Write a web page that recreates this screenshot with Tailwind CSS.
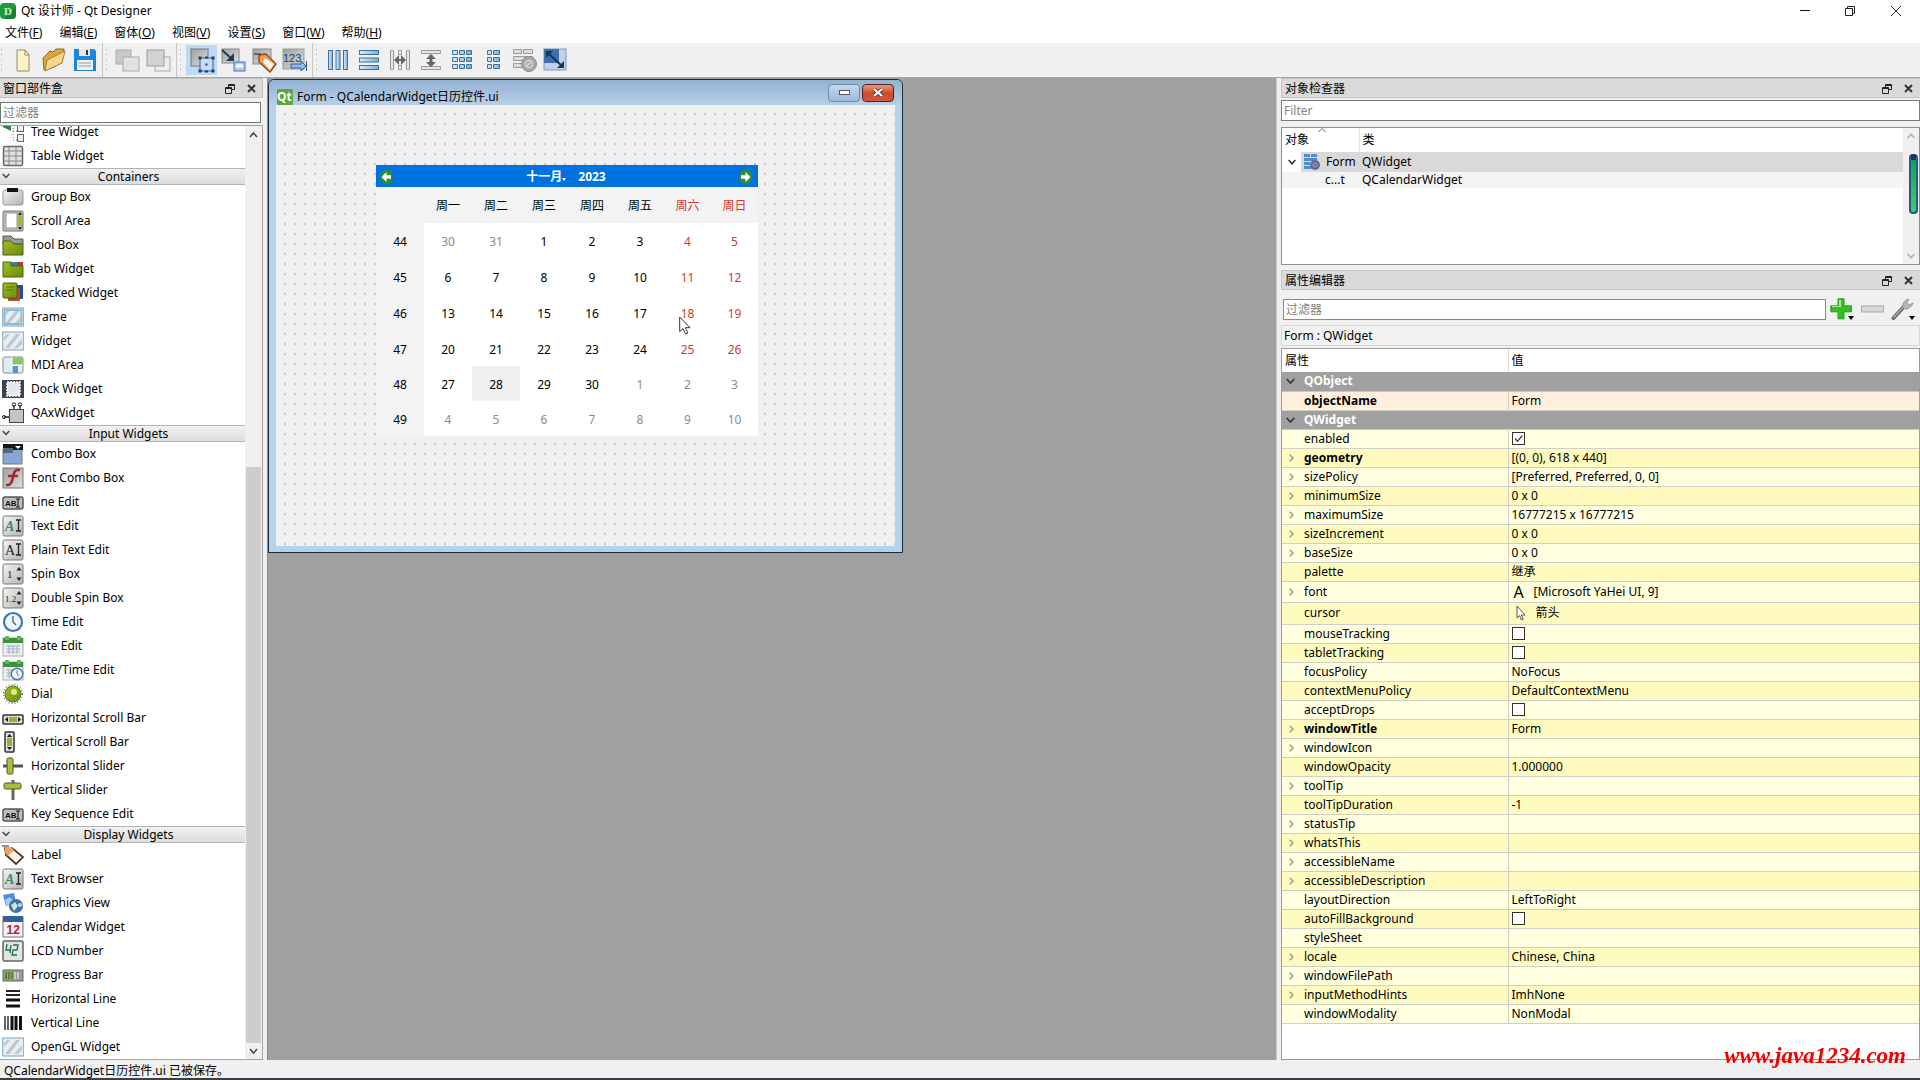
<!DOCTYPE html>
<html lang="zh-CN">
<head>
    <meta charset="UTF-8">
    <meta name="viewport" content="width=device-width, initial-scale=1.0">
    <title>Qt 设计师 - Qt Designer</title>
    <script src="https://cdn.jsdelivr.net/npm/@tailwindcss/browser@4"></script>
</head>
<body class="h-screen flex flex-col overflow-hidden bg-[#f0f0f0] text-black text-xs font-['Noto_Sans','Noto_Sans_CJK_SC',sans-serif]">

    <!-- gradients shared by the icons -->
    <svg class="absolute w-0 h-0" aria-hidden="true">
      <defs>
        <linearGradient id="grey" x1="0" y1="0" x2="1" y2="1"><stop offset="0" stop-color="#f4f4f4"/><stop offset="1" stop-color="#b4b4b4"/></linearGradient>
        <linearGradient id="blue" x1="0" y1="0" x2="1" y2="0"><stop offset="0" stop-color="#d6ebfa"/><stop offset="1" stop-color="#7db0d8"/></linearGradient>
        <linearGradient id="green" x1="0" y1="0" x2="1" y2="1"><stop offset="0" stop-color="#9fc024"/><stop offset="1" stop-color="#6a8a0c"/></linearGradient>
        <linearGradient id="steel" x1="0" y1="0" x2="1" y2="1"><stop offset="0" stop-color="#a0a0a0"/><stop offset="1" stop-color="#dedede"/></linearGradient>
      </defs>
    </svg>

    <!-- title bar -->
    <header class="bg-white">
      <div class="flex items-center h-[22px]">
        <svg class="w-4 h-4 rounded-sm" viewBox="0 0 16 16"><rect width="16" height="16" fill="#1f9a3d"/><path d="M16 3v13H4z" fill="#178033"/><text x="4" y="12" font-size="11" fill="#c9f2c4" font-family="Liberation Serif" font-weight="bold">D</text></svg>
        <h1 class="ml-[5px]">Qt 设计师 - Qt Designer</h1>
        <div class="ml-auto flex">
          <button class="w-[45px] h-[22px] flex items-center justify-center" aria-label="最小化"><svg class="w-3 h-3" viewBox="0 0 12 12"><path d="M1 5.500h10" stroke="#111"/></svg></button>
          <button class="w-[45px] h-[22px] flex items-center justify-center" aria-label="还原"><svg class="w-3 h-3" viewBox="0 0 12 12" fill="none" stroke="#222"><path d="M1.500 3.500h7v7h-7zM3.500 3.500v-2h7v7h-2"/></svg></button>
          <button class="w-[48px] h-[22px] flex items-center justify-center" aria-label="关闭"><svg class="w-3 h-3" viewBox="0 0 12 12"><path d="M1 1l10 10M11 1L1 11" stroke="#333"/></svg></button>
        </div>
      </div>
      <nav class="flex items-center h-[21px] gap-[17px] pl-[5px]">
        <button>文件(<u>F</u>)</button>
        <button>编辑(<u>E</u>)</button>
        <button>窗体(<u>O</u>)</button>
        <button>视图(<u>V</u>)</button>
        <button>设置(<u>S</u>)</button>
        <button>窗口(<u>W</u>)</button>
        <button>帮助(<u>H</u>)</button>
      </nav>
    </header>

    <!-- tool bars, filled by script -->
    <div id="toolbar" class="flex h-[35px] border-b border-[#a5a5a5]"></div>

    <main class="flex flex-1 min-h-0">

      <!-- widget box -->
      <aside class="w-[263px] shrink-0 flex flex-col">
        <div class="flex items-center h-5 pt-px pl-[3px] pr-[6px] bg-[#dadada] border border-l-0 border-[#c4c4c4]">
          <h2>窗口部件盒</h2>
          <button class="ml-auto" aria-label="浮动"><svg class="w-[10px] h-[10px]" viewBox="0 0 10 10" fill="none" stroke="#222"><path d="M3.500 3.500v-3h6v5h-3M.5 3.500h6v6h-6zM.5 4.500h6M3.500 1.500h6"/></svg></button>
          <button class="ml-3" aria-label="关闭"><svg class="w-[9px] h-[9px]" viewBox="0 0 9 9"><path d="M1 1l7 7M8 1L1 8" stroke="#333" stroke-width="2"/></svg></button>
        </div>
        <input type="text" aria-label="过滤器" placeholder="过滤器" class="mt-1 h-[21px] w-[261px] px-[2px] bg-white border border-[#6c7a74] placeholder:text-[#828282] outline-none">
        <div class="mt-[2px] flex flex-1 min-h-0 bg-white border border-[#a0a4a8] border-l-0">
          <div id="widgets" class="flex-1 min-w-0 overflow-hidden"></div>
          <div class="w-[17px] pr-px flex flex-col items-center bg-[#f0f0f0]">
            <svg class="w-[9px] h-4 shrink-0" viewBox="0 0 9 16"><path d="M1 11l3.500-4L8 11" fill="none" stroke="#444" stroke-width="1.500"/></svg>
            <div class="mt-[325px] flex-1 w-[15px] bg-[#cdcdcd]"></div>
            <svg class="w-[9px] h-4 shrink-0" viewBox="0 0 9 16"><path d="M1 6l3.500 4L8 6" fill="none" stroke="#444" stroke-width="1.500"/></svg>
          </div>
        </div>
      </aside>

      <!-- MDI area -->
      <section class="relative flex-1 ml-1 bg-[#a0a0a0] border-l border-[#8a8a8a]">
        <article class="absolute left-0 top-px w-[635px] h-[474px] flex flex-col rounded-t-md border border-[#1c2b36] bg-[#b5d2ec] pb-[6px]">
          <div class="flex items-center h-[25px] shrink-0 px-2 rounded-t-md bg-linear-to-b from-[#93b1d1] to-[#b7cfe9]">
            <svg class="w-4 h-4 mt-2" viewBox="0 0 16 16"><rect width="16" height="16" rx="1" fill="#5aa83a"/><text x="0" y="12" font-size="12" fill="#fff" font-family="Noto Sans" font-weight="bold">Qt</text></svg>
            <h2 class="ml-1 mt-2">Form - QCalendarWidget日历控件.ui</h2>
            <button aria-label="最小化" class="ml-auto w-8 h-[18px] flex items-center justify-center rounded-sm border border-[#6f8aa8] bg-linear-to-b from-[#c3d8ee] to-[#9dbbdc]"><svg class="w-[11px] h-[5px]" viewBox="0 0 11 5"><rect x=".5" y=".5" width="10" height="4" fill="#fff" stroke="#556"/></svg></button>
            <button aria-label="关闭" class="ml-[2px] w-8 h-[18px] flex items-center justify-center rounded-sm border border-[#5c1f18] bg-linear-to-b from-[#e59a84] via-[#cf4a2a] to-[#d0583a]"><svg class="w-[10px] h-[9px]" viewBox="0 0 10 9"><path d="M1 1l8 7M9 1L1 8" stroke="#433" stroke-width="3.500"/><path d="M1 1l8 7M9 1L1 8" stroke="#fff" stroke-width="2.200"/></svg></button>
          </div>
          <div class="relative flex-1 mx-[7px] bg-[#f0f0f0] bg-[radial-gradient(circle_at_9px_9px,#c8c8c8_1px,transparent_1px)] bg-[length:10px_10px]">
            <div class="absolute left-[100px] top-[60px] w-[382px]">
              <div class="flex items-center h-[22px] pl-1 pr-[6px] pt-px bg-[#0072df] text-white font-bold">
                <button aria-label="上个月"><svg class="w-[13px] h-4" viewBox="0 0 13 16"><ellipse cx="6.500" cy="8" rx="6.400" ry="7.500" fill="#2f8b3a"/><path d="M1.500 8L6.500 3v3.300H11v3.400H6.500V13z" fill="#fff"/></svg></button>
                <button class="ml-auto flex items-end">十一月<svg class="w-1 h-1 mb-1" viewBox="0 0 4 4"><path d="M0 1h4L2 4z" fill="#fff"/></svg></button>
                <button class="ml-3 mr-auto">2023</button>
                <button aria-label="下个月"><svg class="w-[13px] h-4" viewBox="0 0 13 16"><ellipse cx="6.500" cy="8" rx="6.400" ry="7.500" fill="#2f8b3a"/><path d="M11.500 8L6.500 3v3.300H2v3.400h4.500V13z" fill="#fff"/></svg></button>
              </div>
              <table id="calendar" class="w-full table-fixed text-center bg-white"></table>
            </div>
            <svg class="absolute left-[403px] top-[211px] w-3 h-[19px]" viewBox="0 0 12 19"><path d="M.7 1v14.500l3.300-3 2.500 5.500 2.300-1-2.400-5.300h4.600z" fill="#fff" stroke="#333"/></svg>
          </div>
        </article>
      </section>

      <!-- object inspector and property editor -->
      <aside class="w-[644px] shrink-0 pl-1 flex flex-col border-l border-[#c8c8c8]">
        <div class="flex items-center h-5 pt-px pl-[3px] pr-1 bg-[#dadada] border border-r-0 border-[#c4c4c4]">
          <h2>对象检查器</h2>
          <button class="ml-auto" aria-label="浮动"><svg class="w-[10px] h-[10px]" viewBox="0 0 10 10" fill="none" stroke="#222"><path d="M3.500 3.500v-3h6v5h-3M.5 3.500h6v6h-6zM.5 4.500h6M3.500 1.500h6"/></svg></button>
          <button class="ml-3 mr-[3px]" aria-label="关闭"><svg class="w-[9px] h-[9px]" viewBox="0 0 9 9"><path d="M1 1l7 7M8 1L1 8" stroke="#333" stroke-width="2"/></svg></button>
        </div>
        <input type="text" aria-label="Filter" placeholder="Filter" class="mt-[2px] h-[21px] px-[2px] bg-white border border-[#7a7a7a] placeholder:text-[#828282] outline-none">
        <div class="relative mt-[6px] h-[138px] flex bg-white border border-[#8f8f8f]">
          <div class="flex-1">
            <table class="w-full table-fixed text-left">
              <thead>
                <tr class="h-6">
                  <th class="relative w-[77px] pl-[3px] font-normal border-r border-[#e5e5e5]">对象<svg class="absolute left-9 top-0 w-2 h-1" viewBox="0 0 8 4"><path d="M.5 4L4 .5 7.500 4" fill="none" stroke="#666"/></svg></th>
                  <th class="pl-[3px] font-normal">类</th>
                </tr>
              </thead>
              <tbody>
                <tr class="h-5">
                  <td class="p-0">
                    <div class="flex items-center">
                      <button class="w-[19px] flex justify-center" aria-label="折叠"><svg class="w-2 h-[6px]" viewBox="0 0 8 6"><path d="M.7 1L4 4.800 7.300 1" fill="none" stroke="#333" stroke-width="1.600"/></svg></button>
                      <div class="flex-1 flex items-center h-5 pl-[3px] gap-[6px] bg-[#d9d9d9]">
                        <svg class="w-4 h-4" viewBox="0 0 16 16"><path d="M0 0h6v3H0zM7 0h6v3H7zM0 4h13v3H0zM0 8h6v3H0zM7 8h6v3H7zM0 12h7v3H0z" fill="#4d8fc9"/><circle cx="11" cy="11" r="5" fill="#646a94"/><circle cx="11" cy="11" r="2" fill="none" stroke="#a59cc0"/></svg>
                        Form
                      </div>
                    </div>
                  </td>
                  <td class="pl-[3px] bg-[#d9d9d9]">QWidget</td>
                </tr>
                <tr class="h-4 leading-4 bg-[#f4f4f4]">
                  <td class="pl-[43px]">c...t</td>
                  <td class="pl-[3px]">QCalendarWidget</td>
                </tr>
              </tbody>
            </table>
          </div>
          <div class="w-4 py-[5px] flex flex-col justify-between items-center bg-[#f0f0f0]">
            <svg class="w-2 h-[6px]" viewBox="0 0 8 6"><path d="M.7 5L4 1.200 7.300 5" fill="none" stroke="#b0b0b0" stroke-width="1.500"/></svg>
            <svg class="w-2 h-[6px]" viewBox="0 0 8 6"><path d="M.7 1L4 4.800 7.300 1" fill="none" stroke="#b0b0b0" stroke-width="1.500"/></svg>
          </div>
          <!-- level meter floating over the scroll bar -->
          <div class="absolute right-px top-[26px] w-[9px] h-[60px] rounded-sm border-2 border-[#235a86] border-t-[6px] border-t-[#173a5c] bg-linear-to-b from-[#12a05a] to-[#3fd06c]"></div>
        </div>

        <div class="mt-[5px] flex items-center h-5 pt-px pl-[3px] pr-1 bg-[#dadada] border border-r-0 border-[#c4c4c4]">
          <h2>属性编辑器</h2>
          <button class="ml-auto" aria-label="浮动"><svg class="w-[10px] h-[10px]" viewBox="0 0 10 10" fill="none" stroke="#222"><path d="M3.500 3.500v-3h6v5h-3M.5 3.500h6v6h-6zM.5 4.500h6M3.500 1.500h6"/></svg></button>
          <button class="ml-3 mr-[3px]" aria-label="关闭"><svg class="w-[9px] h-[9px]" viewBox="0 0 9 9"><path d="M1 1l7 7M8 1L1 8" stroke="#333" stroke-width="2"/></svg></button>
        </div>
        <div class="mt-2 flex items-center pl-[2px]">
          <input type="text" aria-label="过滤器" placeholder="过滤器" class="flex-1 h-[21px] px-[2px] bg-white border border-[#8a8a8a] placeholder:text-[#828282] outline-none">
          <button class="ml-1" aria-label="添加"><svg class="w-6 h-[22px]" viewBox="0 0 24 22"><path d="M8 .8h6v7h7.500v6H14v7H8v-7H.8v-6H8z" fill="#32c11e" stroke="#2a9a1c"/><path d="M9 2h2v7H2v-1h7z" fill="#a8ee90"/><path d="M18 18h6l-3 4z" fill="#000"/></svg></button>
          <button class="ml-[7px]" aria-label="删除"><svg class="w-6 h-[22px]" viewBox="0 0 24 22"><rect x=".5" y="8" width="22" height="6" fill="#d8d8d8" stroke="#a9a9a9"/></svg></button>
          <button class="ml-[6px] mr-[5px]" aria-label="设置"><svg class="w-6 h-[22px]" viewBox="0 0 24 22"><path d="M2.500 20L13 8.500" stroke="#666" stroke-width="4" stroke-linecap="round"/><path d="M2.500 19.500L13 8" stroke="#aaa" stroke-width="1.500"/><path d="M12 9.500c-1-5 2-8 6-8.500l-2 4 2 2 4-2c-1 4-5 6.500-8.500 6z" fill="#b5b5b5" stroke="#8a8a8a" stroke-width=".7"/><path d="M18 18h6l-3 4z" fill="#000"/></svg></button>
        </div>
        <div class="mt-[5px] h-[21px] leading-5 pl-[2px] bg-[#f2f2f2] border border-[#d5d5d5]">Form : QWidget</div>
        <div class="mt-[2px] flex-1 min-h-0 bg-white border border-[#9c9c9c]">
          <table id="properties" class="w-full table-fixed text-left border-collapse">
            <thead>
              <tr class="h-[23px]">
                <th class="w-[226px] p-0 pl-[3px] font-normal border-r border-[#dadada]">属性</th>
                <th class="p-0 pl-[3px] font-normal">值</th>
              </tr>
            </thead>
            <tbody></tbody>
          </table>
        </div>
      </aside>
    </main>

    <footer class="h-5 leading-[21px] shrink-0 pl-1 border-b-2 border-[#3d3d42]">QCalendarWidget日历控件.ui 已被保存。</footer>
    <a href="#" class="fixed right-[14px] bottom-[10px] text-[23px] leading-7 font-bold italic text-[#f00000] font-['Liberation_Serif',serif]">www.java1234.com</a>

<script>
  // every icon is drawn on a 22 x 22 grid
  const key = (s, x, size, font, fill) => `<rect x="1" y="1" width="20" height="20" rx="1.500" fill="url(#grey)" stroke="#777"/><text x="${x}" y="15" font-size="${size}" font-family="${font}" fill="${fill}">${s}</text>`
  const abi = '<rect x="1" y="6" width="20" height="12" rx="2" fill="#bdbdbd" stroke="#555" stroke-width="1.500"/><text x="3" y="15" font-size="8" font-weight="bold" font-family="Liberation Sans" fill="#111">AB</text><path d="M14 8h4M14 16h4M16 8v8" stroke="#111"/>'
  const ai = '<rect x="1" y="1" width="20" height="20" rx="1.500" fill="url(#grey)" stroke="#777"/><path d="M14 5h5M14 16h5M16.500 5v11" stroke="#222" stroke-width="1.300"/>'
  const glass = '<rect x=".7" y="2" width="21" height="18" fill="#e3eef5" stroke="#7ba3c0"/><path d="M3 18L14 4h4L7 18zM12 18l8-9v5l-4 4zM2 11l6-7H5L2 7z" fill="#c6c4c4"/>'
  const cal = '<rect x="1" y="3" width="20" height="18" fill="#eef0f0" stroke="#aaa"/><path d="M1 3h20v5H1z" fill="#3f9140"/><path d="M3 1h4v4H3zM15 1h4v4h-4z" fill="#63b35e"/><path d="M4 11h14M4 14h14M4 17h14M7 10v9M11 10v9M15 10v9" stroke="#9fb2c4"/>'
  const clock = '<circle cx="11" cy="11" r="9" fill="#eef5fc" stroke="#3f78b8" stroke-width="2.200"/><path d="M11 5v6l3 3" fill="none" stroke="#5b6b85" stroke-width="1.500"/>'
  const arrows = '<path d="M17 4l2.500 3.500h-5zM17 18l2.500-3.500h-5z" fill="#222"/>'
  const tag = '<path d="M3 4h7l11 9-7 7L4 11z" fill="#fdf3e4" stroke="#4a3420" stroke-width="1.700"/><path d="M3 3h6l3 3-6 6-3-3z" fill="#f2a25c"/><path d="M0 2h7" stroke="#222"/>'

  const icons = {
    tree: '<path d="M1 0l8 3v7L1 6z" fill="#2f7d3c"/><path d="M11 4v15M11 10h5M11 19h5" stroke="#666" stroke-dasharray="1 2"/><rect x="15.500" y="3.500" width="6" height="7" fill="#eee" stroke="#666"/><rect x="15.500" y="13.500" width="6" height="7" fill="#eee" stroke="#666"/>',
    table: '<rect x="1.500" y="1.500" width="19" height="19" rx="1.500" fill="#e0e0e0" stroke="#666" stroke-width="1.500"/><path d="M2 6h18M2 11h18M2 16h18M7 2v18M14 2v18" stroke="#888"/>',
    group: '<rect x="1" y="4" width="20" height="15" rx="2" fill="url(#grey)" stroke="#999"/><path d="M5 2h11v4H5z" fill="#111"/>',
    scroll: '<rect x="1" y="1" width="20" height="20" rx="1" fill="#bbb" stroke="#777"/><rect x="4" y="3" width="11" height="15" fill="#fff" stroke="#999"/><rect x="16" y="6" width="4" height="10" fill="#9cb83a"/><path d="M16 5h4l-2-3zM16 17h4l-2 3z" fill="#222"/>',
    tool: '<path d="M1 2h8l3 3h9v5H1z" fill="#999" stroke="#555"/><path d="M1 7h8l3 3h9v11H1z" fill="url(#green)" stroke="#4d5f12"/>',
    tab: '<path d="M1 4h20v5H1z" fill="#345"/><path d="M9 4h6v4H9z" fill="#3f78c0"/><path d="M15 4h6v4h-6z" fill="#a8442a"/><path d="M1 4h8v4h12v11H1z" fill="url(#green)" stroke="#4d5f12"/>',
    stacked: '<rect x="9" y="3" width="12" height="14" rx="1" fill="#274a9c"/><rect x="6" y="6" width="12" height="13" rx="1" fill="#b5482a"/><rect x="1" y="1" width="14" height="15" rx="1" fill="url(#green)" stroke="#4d5f12"/><path d="M4 5h8M4 8h8" stroke="#5d7410"/>',
    frame: glass + '<rect x="2.500" y="4" width="17" height="14" fill="none" stroke="#8dbbdc" stroke-width="2"/>',
    widget: glass,
    mdi: '<rect x="1" y="3" width="20" height="16" rx="1.500" fill="#e2ecf4" stroke="#8a8a8a"/><path d="M10 3h11v8H10z" fill="#8fc46a"/><path d="M10 12h6v7h-6z" fill="#5f94c4"/><path d="M10 3v16M10 11h11" stroke="#fff"/>',
    dock: '<rect x="0" y="2" width="22" height="18" fill="#3a4552"/><rect x="5" y="4" width="13" height="14" fill="#e4e8ec" stroke="#fff" stroke-width="1.500" stroke-dasharray="2 1"/>',
    ax: '<path d="M12 8V3M18 8V3M8 15H2" stroke="#222" stroke-width="1.300"/><circle cx="12" cy="2.500" r="1.700" fill="none" stroke="#222"/><circle cx="18" cy="2.500" r="1.700" fill="none" stroke="#222"/><circle cx="2" cy="15" r="1.500" fill="none" stroke="#222"/><rect x="7.500" y="7.500" width="14" height="13" fill="#c4c4c4" stroke="#444"/>',
    combo: '<path d="M1 6h19v15H1z" fill="#83a9d2" stroke="#777"/><path d="M1 1h20v6H1z" fill="#15181c"/><path d="M13 3h6l-3 3z" fill="#fff"/><path d="M1 5h10v5H1z" fill="#56677a"/>',
    font: '<rect x="1" y="1" width="20" height="20" fill="url(#steel)" stroke="#777"/><path d="M17 3c-4-1-5 2-6 7s-2 8-6 8M7 9h8" fill="none" stroke="#a8262a" stroke-width="2.600" stroke-linecap="round"/>',
    line: abi,
    text: ai + '<text x="3" y="16" font-size="14" font-style="italic" font-family="Liberation Serif" font-weight="bold" fill="#3f8a5a">A</text>',
    plain: ai + '<text x="3" y="16" font-size="14" font-family="Liberation Serif" fill="#222">A</text>',
    spin: key('1', 5, 11, 'Liberation Serif', '#222') + arrows,
    dspin: key('1.2', 3, 9, 'Liberation Serif', '#222') + arrows,
    time: clock,
    date: cal,
    datetime: cal + '<g transform="translate(8 8) scale(.64)">' + clock + '</g>',
    dial: '<circle cx="11" cy="11" r="9.300" fill="none" stroke="#777" stroke-width="1.500" stroke-dasharray="1 2"/><circle cx="11" cy="11" r="8" fill="url(#green)" stroke="#5d7a18"/><circle cx="12" cy="9" r="3" fill="#dcea8c"/>',
    hscroll: '<rect x="1" y="8" width="20" height="9" rx="1" fill="#ddd" stroke="#333" stroke-width="1.500"/><rect x="7" y="10" width="8" height="5" fill="#97b52c"/><path d="M6 10v5l-3-2.500zM16 10v5l3-2.500z" fill="#111"/>',
    vscroll: '<rect x="3" y="1" width="9" height="20" rx="1" fill="#ddd" stroke="#333" stroke-width="1.500"/><rect x="5" y="7" width="5" height="8" fill="#97b52c"/><path d="M5 6h5L7.500 3zM5 16h5l-2.500 3z" fill="#111"/>',
    hslider: '<path d="M1 11h20" stroke="#555" stroke-width="3"/><rect x="5" y="3" width="6" height="16" rx="1.500" fill="#a4bf45" stroke="#4d5f12"/>',
    vslider: '<path d="M11 1v20" stroke="#666" stroke-width="3"/><rect x="2" y="4" width="17" height="6" rx="1.500" fill="#a4bf45" stroke="#4d5f12"/>',
    keys: abi,
    label: tag,
    graphics: '<path d="M1 3l11-2 2 11-10 2z" fill="#4a8fd6"/><path d="M3 8l4-3 6 4-1 4-7 1z" fill="#9ed2ee"/><circle cx="14" cy="14" r="7" fill="#3b6fb6"/><path d="M9 13l4-3 3 4-4 5z" fill="#cfe6c0"/><circle cx="18" cy="13" r="2" fill="#b8d4f0"/>',
    calendar: '<rect x="1" y="1" width="20" height="20" fill="#f2f2f2" stroke="#777"/><path d="M1 0h20v6H1z" fill="#2f5f9e"/><text x="4.500" y="18" font-size="12" font-weight="bold" font-family="Liberation Sans" fill="#b3202a">12</text>',
    lcd: '<rect x="1" y="1" width="20" height="20" rx="1.500" fill="#dfe6e1" stroke="#666" stroke-width="1.500"/><path d="M5 4l-1 6h5M9 5l-1 8M11 5h5l-1 5h-4l-1 5h5" fill="none" stroke="#2d6a48" stroke-width="1.300"/>',
    progress: '<rect x="1" y="6" width="20" height="11" fill="#9a9a92" stroke="#666"/><path d="M4 8v7M7 8v7M10 8v7" stroke="#5d8a1c" stroke-width="2"/><path d="M13 8v7M16 8v7" stroke="#c8c8c8" stroke-width="2"/>',
    hline: '<path d="M4 3h14M4 7h14" stroke="#222" stroke-width="2"/><path d="M4 12h14M4 18h14" stroke="#111" stroke-width="3"/>',
    vline: '<path d="M3 4v14M6 4v14" stroke="#333" stroke-width="1.500"/><path d="M10 4v14M14 4v14M18.500 4v14" stroke="#111" stroke-width="3"/>',
    opengl: glass,

    // tool bar, 26 x 26 grid
    t_new: '<path d="M7 3h8l4 5v16H7z" fill="#fbf3c4" stroke="#8f8a6a"/><path d="M15 3v5h4z" fill="#fff" stroke="#8f8a6a"/>',
    t_open: '<path d="M2 11l7-7 3 1 3-3h8l-1 9-9 9-10 3z" fill="#d9a93c" stroke="#8a6a22"/><path d="M6 13L24 4l-3 12L4 24z" fill="#f3d78a" stroke="#a17d2c"/>',
    t_save: '<path d="M2 2h20l2 2v20H2z" fill="#1c86dc"/><path d="M7 2h11v7H7z" fill="#e8e8e8"/><path d="M14 3h2v5h-2z" fill="#333"/><path d="M5 13h16v10H5z" fill="#efefef"/><path d="M7 16h12M7 19h12" stroke="#999"/>',
    t_back: '<rect x="1" y="3" width="15" height="14" fill="#c9c9c9" stroke="#aaa"/><rect x="8" y="10" width="16" height="14" fill="#e2e2e2" stroke="#aaa"/>',
    t_front: '<rect x="9" y="10" width="15" height="14" fill="#eee" stroke="#aaa"/><rect x="1" y="3" width="17" height="16" fill="#d2d2d2" stroke="#999"/>',
    t_edit: '<rect x="2" y="2" width="17" height="17" fill="url(#steel)" stroke="#777"/><rect x="11" y="11" width="13" height="13" fill="#c4dcf6" stroke="#3a5f94"/><path d="M9.500 9.500h3v3h-3zM22.500 9.500h3v3h-3zM9.500 22.500h3v3h-3zM22.500 22.500h3v3h-3zM16 9.500h3v2h-3zM16 23.500h3v2h-3zM16.500 16.500h2v2h-2z" fill="#1f3c6a"/>',
    t_signal: '<rect x="2" y="2" width="17" height="14" fill="url(#steel)" stroke="#888"/><rect x="14" y="15" width="11" height="9" fill="#a9cdf2" stroke="#4a79b0"/><path d="M16 19h7" stroke="#fff" stroke-width="3"/><path d="M2 3l10 9" stroke="#223a55" stroke-width="2"/><path d="M14 14V6l-8 8z" fill="#223a55"/>',
    t_buddy: '<rect x="2" y="2" width="18" height="15" fill="url(#steel)" stroke="#888"/><path d="M8 8l7-1 10 10-6 8L8 15z" fill="#f29a55" stroke="#8a4a1c" stroke-width="1.400"/><path d="M14 11l9 6-4 6-7-8z" fill="#fff4e6"/><path d="M3 7h7" stroke="#222"/>',
    t_tab: '<rect x="1" y="2" width="21" height="20" fill="url(#steel)" stroke="#999"/><text x="1" y="15" font-size="11" font-family="Liberation Sans" fill="#153f80">123</text><path d="M9 17h10v-3l5 5-5 5v-3H9zM24.500 14v10" fill="#8fbce8" stroke="#2a5a9c"/>',
    t_h: '<g fill="url(#blue)" stroke="#3e709c"><rect x="3.500" y="3.500" width="4" height="19"/><rect x="11" y="3.500" width="4" height="19"/><rect x="18.500" y="3.500" width="4" height="19"/></g>',
    t_v: '<g fill="url(#blue)" stroke="#3e709c"><rect x="3.500" y="3.500" width="19" height="4"/><rect x="3.500" y="11" width="19" height="4"/><rect x="3.500" y="18.500" width="19" height="4"/></g>',
    t_hs: '<g fill="#e4e4e4" stroke="#999"><path d="M3.500 3.500h3v19h-3zM19.500 3.500h3v19h-3zM11.500 3.500h3v4h-3zM11.500 18.500h3v4h-3z"/></g><path d="M8 13h10" stroke="#666" stroke-width="2"/><path d="M7 13l5-5v10zM19 13l-5-5v10z" fill="#666"/>',
    t_vs: '<g fill="#e4e4e4" stroke="#999"><path d="M3.500 3.500v3h19v-3zM3.500 19.500v3h19v-3z"/></g><path d="M13 8v10" stroke="#666" stroke-width="3"/><path d="M13 7l-5 5h10zM13 20l-5-5h10z" fill="#666"/>',
    t_grid: '<g fill="url(#blue)" stroke="#3e709c"><path d="M3.500 3.500h5v4h-5zM10.500 3.500h5v4h-5zM17.500 3.500h5v4h-5zM3.500 10.500h5v4h-5zM10.500 10.500h5v4h-5zM17.500 10.500h5v4h-5zM3.500 17.500h5v4h-5zM10.500 17.500h5v4h-5zM17.500 17.500h5v4h-5z"/></g>',
    t_form: '<g fill="url(#blue)" stroke="#3e709c"><path d="M7.500 3.500h4v4h-4zM13.500 3.500h6v4h-6zM7.500 10.500h4v4h-4zM13.500 10.500h6v4h-6zM7.500 17.500h4v4h-4zM13.500 17.500h6v4h-6z"/></g>',
    t_break: '<g fill="#ddd" stroke="#999"><path d="M2.500 2.500h8v4h-8zM12.500 2.500h9v4h-9zM2.500 9.500h19v4h-19zM2.500 16.500h9v4h-9z"/></g><circle cx="18" cy="17" r="7.500" fill="#a8a8a8" stroke="#8c8c8c"/><circle cx="18" cy="17" r="3.500" fill="none" stroke="#d6d6d6" stroke-width="1.500"/><path d="M15.500 19.500l5-5" stroke="#d6d6d6" stroke-width="1.500"/>',
    t_adjust: '<rect x="2" y="2" width="22" height="21" fill="#bcd3ea" stroke="#7f9ab8"/><rect x="2" y="2" width="15" height="14" fill="#3b6fae"/><path d="M6 6l14 13" stroke="#123a4a" stroke-width="2"/><path d="M4 4h7l-7 7zM22 21h-7l7-7z" fill="#123a4a"/>'
  }

  const groups = [
    [['t_new', '新建'], ['t_open', '打开'], ['t_save', '保存']],
    [['t_back', '置后'], ['t_front', '置前']],
    [['t_edit', '编辑控件'], ['t_signal', '编辑信号/槽'], ['t_buddy', '编辑伙伴'], ['t_tab', '编辑 Tab 顺序']],
    [['t_h', '水平布局'], ['t_v', '垂直布局'], ['t_hs', '水平分裂器'], ['t_vs', '垂直分裂器'], ['t_grid', '栅格布局'], ['t_form', '表单布局'], ['t_break', '打破布局'], ['t_adjust', '调整大小']]
  ]
  document.querySelector('#toolbar').innerHTML = groups.map((g, i) => `
    <div class="flex items-center pr-[2px] ${i < 3 ? 'border-r border-[#c6c6c6]' : ''}">
      <span class="w-[3px] h-[27px] mr-1 ${i ? 'ml-[2px]' : ''} bg-[radial-gradient(circle,#a8a8a8_1px,transparent_1px)] bg-[length:3px_5px]"></span>
      ${g.map(([id, name]) => `<button aria-label="${name}" class="w-[31px] h-[30px] flex items-center justify-center ${id === 't_edit' ? 'bg-[#bcd9f5]' : ''}"><svg class="w-[26px] h-[26px]" viewBox="0 0 26 26">${icons[id]}</svg></button>`).join('')}
    </div>`).join('')

  const boxes = [
    ['', [['tree', 'Tree Widget'], ['table', 'Table Widget']]],
    ['Containers', [['group', 'Group Box'], ['scroll', 'Scroll Area'], ['tool', 'Tool Box'], ['tab', 'Tab Widget'], ['stacked', 'Stacked Widget'], ['frame', 'Frame'], ['widget', 'Widget'], ['mdi', 'MDI Area'], ['dock', 'Dock Widget'], ['ax', 'QAxWidget']]],
    ['Input Widgets', [['combo', 'Combo Box'], ['font', 'Font Combo Box'], ['line', 'Line Edit'], ['text', 'Text Edit'], ['plain', 'Plain Text Edit'], ['spin', 'Spin Box'], ['dspin', 'Double Spin Box'], ['time', 'Time Edit'], ['date', 'Date Edit'], ['datetime', 'Date/Time Edit'], ['dial', 'Dial'], ['hscroll', 'Horizontal Scroll Bar'], ['vscroll', 'Vertical Scroll Bar'], ['hslider', 'Horizontal Slider'], ['vslider', 'Vertical Slider'], ['keys', 'Key Sequence Edit']]],
    ['Display Widgets', [['label', 'Label'], ['text', 'Text Browser'], ['graphics', 'Graphics View'], ['calendar', 'Calendar Widget'], ['lcd', 'LCD Number'], ['progress', 'Progress Bar'], ['hline', 'Horizontal Line'], ['vline', 'Vertical Line'], ['opengl', 'OpenGL Widget']]]
  ]
  // the list is scrolled a little, so the first row is cut off
  document.querySelector('#widgets').innerHTML = '<div class="-mt-[6px]">' + boxes.map(([title, items]) => `
    ${title ? `<button class="relative block w-full h-[17px] leading-[15px] text-center border-y border-[#b4b4b4] bg-linear-to-b from-[#f2f2f2] to-[#dcdcdc]"><svg class="absolute left-[2px] top-1 w-2 h-[6px]" viewBox="0 0 8 6"><path d="M.7 1L4 4.500 7.300 1" fill="none" stroke="#444" stroke-width="1.500"/></svg><span class="ml-3">${title}</span></button>` : ''}
    <ul>${items.map(([id, name]) => `<li class="flex items-center h-6 pl-[2px] gap-[7px]"><svg class="w-[22px] h-[22px]" viewBox="0 0 22 22">${icons[id]}</svg>${name}</li>`).join('')}</ul>`).join('') + '</div>'

  const weeks = [
    [44, 30, 31, 1, 2, 3, 4, 5], [45, 6, 7, 8, 9, 10, 11, 12], [46, 13, 14, 15, 16, 17, 18, 19],
    [47, 20, 21, 22, 23, 24, 25, 26], [48, 27, 28, 29, 30, 1, 2, 3], [49, 4, 5, 6, 7, 8, 9, 10]
  ]
  const dayClass = (r, c, d) => {
    if ((r === 0 && d > 20) || (r > 3 && d < 20)) return 'text-[#8c8c8c]'
    if (c > 4) return 'text-[#d4392b]'
    return r === 4 && d === 28 ? 'bg-[#f0f0f0]' : ''
  }
  document.querySelector('#calendar').innerHTML =
    '<thead><tr class="h-9 bg-[#f3f3f3]"><th class="w-12"></th>' + ['周一', '周二', '周三', '周四', '周五', '周六', '周日'].map((d, c) => `<th class="p-0 pt-[2px] font-normal ${c > 4 ? 'text-[#d4392b]' : 'w-12'}">${d}</th>`).join('') + '</tr></thead><tbody>' +
    weeks.map(([n, ...days], r) => `<tr class="${r < 3 ? 'h-9' : 'h-[35px]'}"><th class="p-0 pt-[2px] font-normal bg-[#f3f3f3]">${n}</th>${days.map((d, c) => `<td class="p-0 pt-[2px] ${dayClass(r, c, d)}">${d}</td>`).join('')}</tr>`).join('') + '</tbody>'

  // [name, value, expandable, changed], true/false values are tick boxes
  const props = [
    ['enabled', true], ['geometry', '[(0, 0), 618 x 440]', 1, 1], ['sizePolicy', '[Preferred, Preferred, 0, 0]', 1], ['minimumSize', '0 x 0', 1],
    ['maximumSize', '16777215 x 16777215', 1], ['sizeIncrement', '0 x 0', 1], ['baseSize', '0 x 0', 1], ['palette', '继承'],
    ['font', '[Microsoft YaHei UI, 9]', 1], ['cursor', '箭头'], ['mouseTracking', false], ['tabletTracking', false], ['focusPolicy', 'NoFocus'],
    ['contextMenuPolicy', 'DefaultContextMenu'], ['acceptDrops', false], ['windowTitle', 'Form', 1, 1], ['windowIcon', '', 1],
    ['windowOpacity', '1.000000'], ['toolTip', '', 1], ['toolTipDuration', '-1'], ['statusTip', '', 1], ['whatsThis', '', 1],
    ['accessibleName', '', 1], ['accessibleDescription', '', 1], ['layoutDirection', 'LeftToRight'], ['autoFillBackground', false],
    ['styleSheet', ''], ['locale', 'Chinese, China', 1], ['windowFilePath', '', 1], ['inputMethodHints', 'ImhNone', 1], ['windowModality', 'NonModal']
  ]
  const valueOf = (name, v) => {
    if (typeof v === 'boolean') return `<input type="checkbox" id="p_${name}" ${v ? 'checked' : ''} class="appearance-none w-[13px] h-[13px] bg-white border border-[#333]">${v ? '<svg class="absolute left-[5px] top-1 w-[9px] h-[9px] pointer-events-none" viewBox="0 0 9 9"><path d="M1 4.500l2.500 2.800L8.300 1.500" fill="none" stroke="#333" stroke-width="1.200"/></svg>' : ''}`
    if (name === 'font') return `<span class="w-[22px] pl-[2px] text-base leading-4">A</span>${v}`
    if (name === 'cursor') return `<svg class="w-[10px] h-4 ml-1 mr-[10px]" viewBox="0 0 10 16"><path d="M1 1v12l2.500-2.500 2 4.500 1.800-.8-2-4.200H9z" fill="#fff" stroke="#555"/></svg>${v}`
    return v
  }
  const groupRow = (name) => `<tr class="h-[19px] bg-[#a0a0a0] text-white font-bold border-b border-[#c8c8c8]"><td colspan="2" class="p-0"><div class="flex items-center h-[18px]"><button class="w-[22px] pl-1" aria-label="折叠"><svg class="w-[9px] h-[6px]" viewBox="0 0 9 6"><path d="M.7 1l3.800 4L8.300 1" fill="none" stroke="#333" stroke-width="1.700"/></svg></button>${name}</div></td></tr>`
  const propRow = ([name, v, open, changed], bg, h) => `<tr class="${h} ${bg} border-b border-[#cfcfc8]">
      <td class="p-0 border-r border-[#cfcfc8]"><div class="flex items-center h-[18px] leading-[18px] ${changed ? 'font-bold' : ''}"><span class="w-[22px] pl-[7px]">${open ? '<svg class="w-[5px] h-2" viewBox="0 0 5 8"><path d="M.7 .7L4.200 4 .7 7.300" fill="none" stroke="#8e8e80" stroke-width="1.200"/></svg>' : ''}</span>${typeof v === 'boolean' ? `<label for="p_${name}">${name}</label>` : name}</div></td>
      <td class="p-0"><div class="relative flex items-center h-[18px] leading-[18px] pl-[3px]">${valueOf(name, v)}</div></td>
    </tr>`
  document.querySelector('#properties tbody').innerHTML =
    groupRow('QObject') + propRow(['objectName', 'Form', 0, 1], 'bg-[#fff0de]', 'h-[19px]') + groupRow('QWidget') +
    props.map((p, i) => propRow(p, i % 2 ? 'bg-[#fffbbf]' : 'bg-[#fffede]', p[0] === 'font' ? 'h-[21px]' : p[0] === 'cursor' ? 'h-[22px]' : 'h-[19px]')).join('')
</script>
</body>
</html>
